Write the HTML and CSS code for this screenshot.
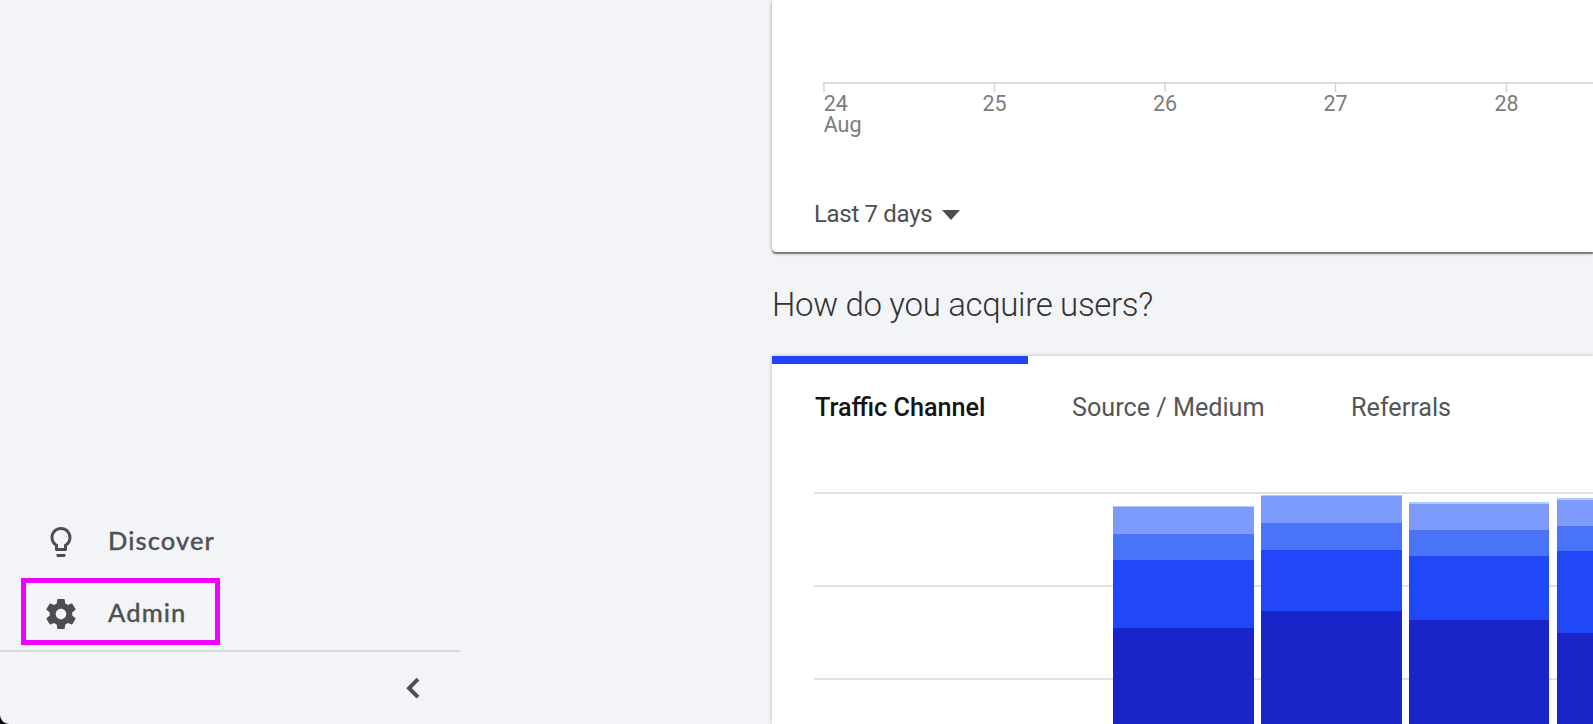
FILE: index.html
```
<!DOCTYPE html>
<html lang="en">
<head>
<meta charset="utf-8">
<title>Analytics Home</title>
<link rel="stylesheet" href="styles.css">
</head>
<body>
<div class="app">
  <nav class="sidebar">
    <a class="nav-item discover">
      <svg class="nav-icon" viewBox="0 0 24 24"><path d="M9 21c0 .55.45 1 1 1h4c.55 0 1-.45 1-1v-1H9v1zm3-19C8.14 2 5 5.14 5 9c0 2.38 1.19 4.47 3 5.74V17c0 .55.45 1 1 1h6c.55 0 1-.45 1-1v-2.26c1.81-1.27 3-3.36 3-5.74 0-3.86-3.14-7-7-7zm2.85 11.1l-.85.6V16h-4v-2.3l-.85-.6C7.8 12.16 7 10.63 7 9c0-2.76 2.24-5 5-5s5 2.24 5 5c0 1.63-.8 3.16-2.15 4.1z"/></svg>
      <span class="nav-label">Discover</span>
    </a>
    <a class="nav-item admin">
      <svg class="nav-icon" viewBox="0 0 24 24"><path d="M19.43 12.98c.04-.32.07-.64.07-.98s-.03-.66-.07-.98l2.11-1.65c.19-.15.24-.42.12-.64l-2-3.46c-.12-.22-.39-.3-.61-.22l-2.49 1c-.52-.4-1.08-.73-1.69-.98l-.38-2.65C14.46 2.18 14.25 2 14 2h-4c-.25 0-.46.18-.49.42l-.38 2.65c-.61.25-1.17.59-1.69.98l-2.49-1c-.23-.09-.49 0-.61.22l-2 3.46c-.13.22-.07.49.12.64l2.11 1.65c-.04.32-.07.65-.07.98s.03.66.07.98l-2.11 1.65c-.19.15-.24.42-.12.64l2 3.46c.12.22.39.3.61.22l2.49-1c.52.4 1.08.73 1.69.98l.38 2.65c.03.24.24.42.49.42h4c.25 0 .46-.18.49-.42l.38-2.65c.61-.25 1.17-.59 1.69-.98l2.49 1c.23.09.49 0 .61-.22l2-3.46c.12-.22.07-.49-.12-.64l-2.11-1.65zM12 15.5c-1.93 0-3.5-1.57-3.5-3.5s1.57-3.5 3.5-3.5 3.5 1.57 3.5 3.5-1.57 3.5-3.5 3.5z"/></svg>
      <span class="nav-label">Admin</span>
    </a>
    <div class="collapse">
      <svg class="chevron" viewBox="0 0 16 24"><path d="M13 3.2 4.1 12.2l8.9 9"/></svg>
    </div>
  </nav>
  <main class="main">
    <section class="card trend">
      <svg class="axis" viewBox="0 0 821 150">
        <path class="axis-line" d="M51 83H821"/>
        <path class="tick" d="M52 82V92M222.5 82V92M393 82V92M563.5 82V92M734.5 82V92"/>
        <g class="axis-text">
          <text x="51.7" y="111">24</text>
          <text x="51.7" y="132">Aug</text>
          <text class="mid" x="222.5" y="111">25</text>
          <text class="mid" x="393" y="111">26</text>
          <text class="mid" x="563.5" y="111">27</text>
          <text class="mid" x="734.5" y="111">28</text>
        </g>
      </svg>
      <div class="range">
        <span class="range-label">Last 7 days</span>
        <svg class="caret" viewBox="0 0 18 10"><path d="M0 0H18L9 10Z"/></svg>
      </div>
    </section>
    <h2 class="heading">How do you acquire users?</h2>
    <section class="card acquire">
      <div class="tabs">
        <div class="tab active"><span>Traffic Channel</span></div>
        <div class="tab medium"><span>Source / Medium</span></div>
        <div class="tab"><span>Referrals</span></div>
      </div>
      <svg class="bars" viewBox="0 0 821 244">
        <path class="grid" d="M42 13H821M42 106H821M42 199H821"/>
        <g class="s5"><path d="M341 26h141v10H341zM489 15h141v10H489zM637 22h140v10H637zM785 18h36v10H785z"/></g>
        <g class="s4"><path d="M341 27h141v28H341zM489 16h141v28H489zM637 24h140v27H637zM785 20h36v27H785z"/></g>
        <g class="s3"><path d="M341 54h141v27H341zM489 43h141v28H489zM637 50h140v27H637zM785 46h36v26H785z"/></g>
        <g class="s2"><path d="M341 80h141v69H341zM489 70h141v62H489zM637 76h140v65H637zM785 71h36v83H785z"/></g>
        <g class="s1"><path d="M341 148h141v96H341zM489 131h141v113H489zM637 140h140v104H637zM785 153h36v91H785z"/></g>
      </svg>
    </section>
  </main>
</div>
</body>
</html>
```
FILE: styles.css
```
* { box-sizing: border-box; }
html { background: #000; }
body { margin: 0; height: 724px; overflow: hidden; background: #000; font-family: Roboto, sans-serif; }
.app { display: flex; height: 724px; background: #f3f4f8; border-bottom-left-radius: 9px; overflow: hidden; }
.sidebar { width: 460px; display: flex; flex-direction: column; justify-content: flex-end; flex: none; }
.nav-item { display: flex; align-items: center; margin-left: 21px; width: 199px; height: 67px; border: 5px solid transparent; padding-left: 17px; color: #4c4c4c; }
.discover { margin-bottom: 5px; }
.admin { border-color: #f000ff; margin-bottom: 5px; }
.nav-icon { width: 36px; height: 36px; margin-top: 4px; fill: #4d4e50; flex: none; }
.nav-label { margin-left: 29px; font: 500 25.5px/30px Lato, sans-serif; letter-spacing: 1.1px; color: #4f5052; -webkit-text-stroke: 0.3px #4f5052; }
.collapse { height: 74px; border-top: 2px solid #d8d9dc; display: flex; justify-content: flex-end; align-items: center; padding-right: 39px; }
.chevron { width: 16px; height: 24px; fill: none; stroke: #4f5053; stroke-width: 4; }
.main { flex: 1; min-width: 0; padding-left: 312px; display: flex; flex-direction: column; }
.card { background: #fff; flex: none; }
.trend { height: 252px; border-bottom-left-radius: 4px; box-shadow: 0 2px 1px rgba(0,0,0,.42), 0 1px 4px rgba(0,0,0,.28); }
.axis { display: block; width: 821px; height: 150px; }
.axis-line { stroke: #dcdcdc; stroke-width: 2; }
.tick { stroke: #d0d0d0; stroke-width: 1.3; }
.axis-text { font-size: 21.5px; fill: #7c7c7c; }
.mid { text-anchor: middle; }
.range { display: flex; align-items: center; margin-top: 48px; padding-left: 42px; height: 32px; }
.range-label { font-size: 24px; line-height: 32px; letter-spacing: -0.32px; color: #4f4f4f; }
.caret { width: 18px; height: 10px; margin: 1px 0 0 10px; fill: #4d4d4d; }
.heading { margin: 33px 0 31px; height: 40px; font-size: 33px; line-height: 40px; letter-spacing: -0.33px; font-weight: 300; color: #333; white-space: nowrap; }
.acquire { height: 368px; box-shadow: 0 0 4px rgba(0,0,0,.25); }
.tabs { display: flex; height: 124px; }
.tab { height: 104px; padding: 28px 43px 0; border-top: 8px solid transparent; font-size: 25.2px; line-height: 32px; color: #555; white-space: nowrap; }
.tab.active { width: 256px; margin-right: 1px; border-top-color: #2043f8; color: #151515; font-weight: 500; }
.tab.medium { width: 279px; }
.bars { display: block; width: 821px; height: 244px; }
.grid { stroke: #e1e1e1; stroke-width: 2; }
.s5 { fill: #b5c7ff; }
.s4 { fill: #7c9bfd; }
.s3 { fill: #4974fa; }
.s2 { fill: #2047f8; }
.s1 { fill: #1924c9; }
```
